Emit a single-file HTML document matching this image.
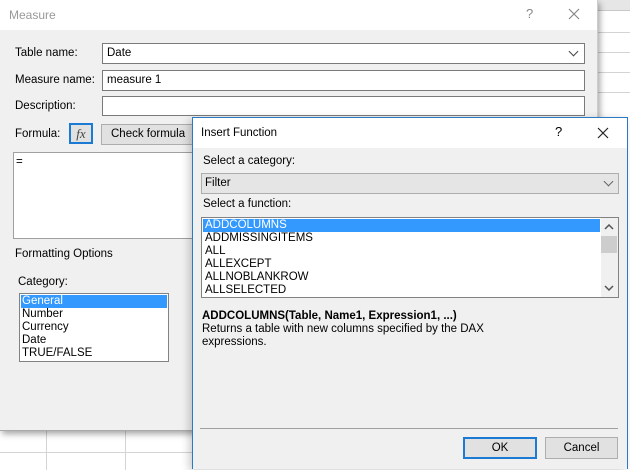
<!DOCTYPE html>
<html><head><style>
*{box-sizing:border-box;margin:0;padding:0}
body{width:630px;height:469px;overflow:hidden;position:relative;background:#fff;font-family:"Liberation Sans",sans-serif;font-size:11.5px;color:#000}
.a{position:absolute}
.hl{position:absolute;height:1px;background:#d4d4d4}
.vl{position:absolute;width:1px;background:#d4d4d4}
.inp{position:absolute;background:#fff;border:1px solid #7a7a7a;padding:2px 4px;line-height:14px}
.t{position:absolute;white-space:nowrap;line-height:14px}
.chev{position:absolute;width:7px;height:7px;border-right:1px solid #444;border-bottom:1px solid #444;transform:rotate(45deg)}
</style></head><body>
<div class="a" style="left:598px;top:0;width:32px;height:11px;background:#e6e6e6;border-bottom:1px solid #c8c8c8"></div>
<div class="hl" style="left:598px;top:32px;width:32px"></div>
<div class="hl" style="left:598px;top:52px;width:32px"></div>
<div class="hl" style="left:598px;top:72px;width:32px"></div>
<div class="hl" style="left:598px;top:92px;width:32px"></div>
<div class="hl" style="left:0;top:452px;width:200px"></div>
<div class="vl" style="left:46px;top:430px;height:40px"></div>
<div class="vl" style="left:125px;top:430px;height:40px"></div>
<div class="a" style="left:0;top:0;width:598px;height:431px;background:#f0f0f0;box-shadow:2px 3px 6px rgba(0,0,0,.35);border-right:1px solid #ccc;border-bottom:1px solid #aaa"></div>
<div class="a" style="left:0;top:0;width:597px;height:30px;background:#fff"></div>
<div class="t" style="left:9px;top:8px;color:#999;font-size:12px">Measure</div>
<div class="t" style="left:526px;top:7px;color:#888;font-size:13px">?</div>
<svg class="a" style="left:568px;top:8px" width="12" height="12"><path d="M1 1L11 11M11 1L1 11" stroke="#888" stroke-width="1.2"/></svg>
<div class="t" style="left:15px;top:46px">Table name:</div>
<div class="t" style="left:15px;top:73px">Measure name:</div>
<div class="t" style="left:15px;top:99px">Description:</div>
<div class="t" style="left:15px;top:127px">Formula:</div>
<div class="inp" style="left:102px;top:43px;width:483px;height:21px">Date</div>
<div class="chev" style="left:570px;top:48px"></div>
<div class="inp" style="left:102px;top:70px;width:483px;height:21px">measure 1</div>
<div class="inp" style="left:102px;top:96px;width:483px;height:20px"></div>
<div class="a" style="left:69px;top:123px;width:24px;height:21px;border:2px solid #1a7ad4;background:#e1e1e1;font-family:'Liberation Serif',serif;font-style:italic;font-size:13px;text-align:center;line-height:17px;color:#444">fx</div>
<div class="a" style="left:101px;top:124px;width:92px;height:21px;border:1px solid #adadad;background:#e1e1e1;padding-left:9px;line-height:19px">Check formula</div>
<div class="a" style="left:13px;top:152px;width:190px;height:87px;background:#fff;border:1px solid #a0a0a0"></div>
<div class="t" style="left:16px;top:155px">=</div>
<div class="t" style="left:15px;top:247px">Formatting Options</div>
<div class="t" style="left:18px;top:275px">Category:</div>
<div class="a" style="left:19px;top:293px;width:150px;height:69px;background:#fff;border:1px solid #828282"></div>
<div class="a" style="left:21px;top:295px;width:146px;height:13px;background:#3399ff"></div>
<div class="t" style="left:22px;top:295px;line-height:13px;color:#fff">General</div>
<div class="t" style="left:22px;top:308px;line-height:13px">Number</div>
<div class="t" style="left:22px;top:321px;line-height:13px">Currency</div>
<div class="t" style="left:22px;top:334px;line-height:13px">Date</div>
<div class="t" style="left:22px;top:347px;line-height:13px">TRUE/FALSE</div>
<div class="a" style="left:192px;top:117px;width:436px;height:352px;background:#f0f0f0;border:1px solid #2b79c4;border-bottom:none;box-shadow:-3px 2px 8px rgba(0,0,0,.2)"></div>
<div class="a" style="left:193px;top:118px;width:434px;height:30px;background:#fff"></div>
<div class="t" style="left:201px;top:126px">Insert Function</div>
<div class="t" style="left:555px;top:125px;font-size:13px">?</div>
<svg class="a" style="left:597px;top:127px" width="12" height="12"><path d="M1 1L11 11M11 1L1 11" stroke="#222" stroke-width="1.2"/></svg>
<div class="t" style="left:203px;top:154px">Select a category:</div>
<div class="a" style="left:201px;top:173px;width:418px;height:21px;background:#e5e5e5;border:1px solid #adadad;padding-left:3px;line-height:19px">Filter</div>
<div class="chev" style="left:605px;top:178px;border-color:#666"></div>
<div class="t" style="left:203px;top:197px">Select a function:</div>
<div class="a" style="left:201px;top:217px;width:418px;height:81px;background:#fff;border:1px solid #828282"></div>
<div class="a" style="left:203px;top:219px;width:397px;height:13px;background:#3399ff"></div>
<div class="t" style="left:205px;top:219px;line-height:13px;color:#fff">ADDCOLUMNS</div>
<div class="t" style="left:205px;top:232px;line-height:13px">ADDMISSINGITEMS</div>
<div class="t" style="left:205px;top:245px;line-height:13px">ALL</div>
<div class="t" style="left:205px;top:258px;line-height:13px">ALLEXCEPT</div>
<div class="t" style="left:205px;top:271px;line-height:13px">ALLNOBLANKROW</div>
<div class="t" style="left:205px;top:284px;line-height:13px">ALLSELECTED</div>
<div class="a" style="left:601px;top:218px;width:17px;height:79px;background:#f0f0f0"></div>
<div class="a" style="left:601px;top:236px;width:16px;height:17px;background:#cdcdcd"></div>
<svg class="a" style="left:604px;top:224px" width="10" height="6"><path d="M1 5L5 1L9 5" stroke="#555" stroke-width="1.5" fill="none"/></svg>
<svg class="a" style="left:604px;top:285px" width="10" height="6"><path d="M1 1L5 5L9 1" stroke="#555" stroke-width="1.5" fill="none"/></svg>
<div class="t" style="left:202px;top:309px;font-weight:bold">ADDCOLUMNS(Table, Name1, Expression1, ...)</div>
<div class="t" style="left:202px;top:322px">Returns a table with new columns specified by the DAX</div>
<div class="t" style="left:202px;top:335px">expressions.</div>
<div class="a" style="left:200px;top:428px;width:418px;height:1px;background:#a0a0a0"></div>
<div class="a" style="left:463px;top:437px;width:74px;height:22px;border:2px solid #1a7ad4;background:#e1e1e1;text-align:center;line-height:18px">OK</div>
<div class="a" style="left:545px;top:437px;width:73px;height:22px;border:1px solid #adadad;background:#e1e1e1;text-align:center;line-height:20px">Cancel</div>
</body></html>
